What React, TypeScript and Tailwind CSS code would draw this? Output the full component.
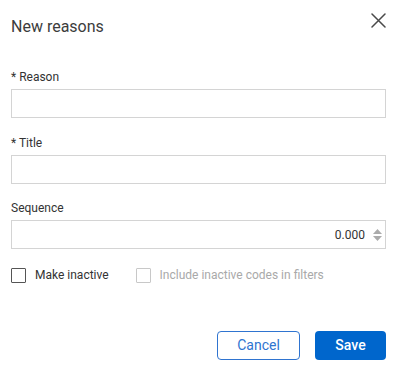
import React from "react";

function Field({ label, className = "", children }: { label: string; className?: string; children?: React.ReactNode }) {
  return (
    <div className={className}>
      <div className="text-[12px] leading-[16px] text-[#333333] mb-[4px]">{label}</div>
      <div className="h-[29px] border border-[#d4d4d4] bg-white flex items-center justify-end">{children}</div>
    </div>
  );
}

export default function App() {
  return (
    <div
      className="w-[400px] h-[372px] bg-white relative overflow-hidden"
      style={{ fontFamily: "Roboto, 'Liberation Sans', sans-serif" }}
    >
      <div className="flex items-start justify-between pl-[11px] pr-[14px]">
        <div className="mt-[17px] text-[16px] leading-[20px] text-[#3c3c3c]">New reasons</div>
        <button className="mt-[13px] w-[15px] h-[15px] flex items-center justify-center">
          <svg width="15" height="15" viewBox="0 0 15 15">
            <path d="M1 1 L14 14 M14 1 L1 14" stroke="#4a4a4a" strokeWidth="1.5" strokeLinecap="round" />
          </svg>
        </button>
      </div>

      <div className="pl-[11px] pr-[14px]">
        <Field label="* Reason" className="mt-[32px]" />
        <Field label="* Title" className="mt-[17px]" />
        <Field label="Sequence" className="mt-[16px]">
          <span className="text-[12px] leading-[16px] text-[#333333] mr-[8px]">0.000</span>
          <div className="flex flex-col items-center gap-[2px] mr-[3px]">
            <svg width="9" height="5" viewBox="0 0 9 5">
              <path d="M4.5 0 L9 5 L0 5 Z" fill="#ababab" />
            </svg>
            <svg width="9" height="5" viewBox="0 0 9 5">
              <path d="M0 0 L9 0 L4.5 5 Z" fill="#ababab" />
            </svg>
          </div>
        </Field>

        <div className="flex items-center mt-[18px] h-[16px]">
          <div className="w-[15px] h-[15px] border border-[#555555] rounded-[1px] bg-white" />
          <span className="ml-[9px] text-[12px] leading-[16px] text-[#333333]">Make inactive</span>
          <div className="ml-[27px] w-[15px] h-[15px] border border-[#c8c8c8] rounded-[1px] bg-white" />
          <span className="ml-[9px] text-[12px] leading-[16px] text-[#a9a9a9]">Include inactive codes in filters</span>
        </div>

        <div className="flex justify-end gap-[15px] mt-[48px]">
          <button className="w-[83px] h-[29px] rounded-[4px] border border-[#2f74d0] bg-white text-[14px] text-[#2f74d0]">
            Cancel
          </button>
          <button className="w-[71px] h-[29px] rounded-[4px] bg-[#0066cc] text-[14px] font-medium text-white">
            Save
          </button>
        </div>
      </div>
    </div>
  );
}
